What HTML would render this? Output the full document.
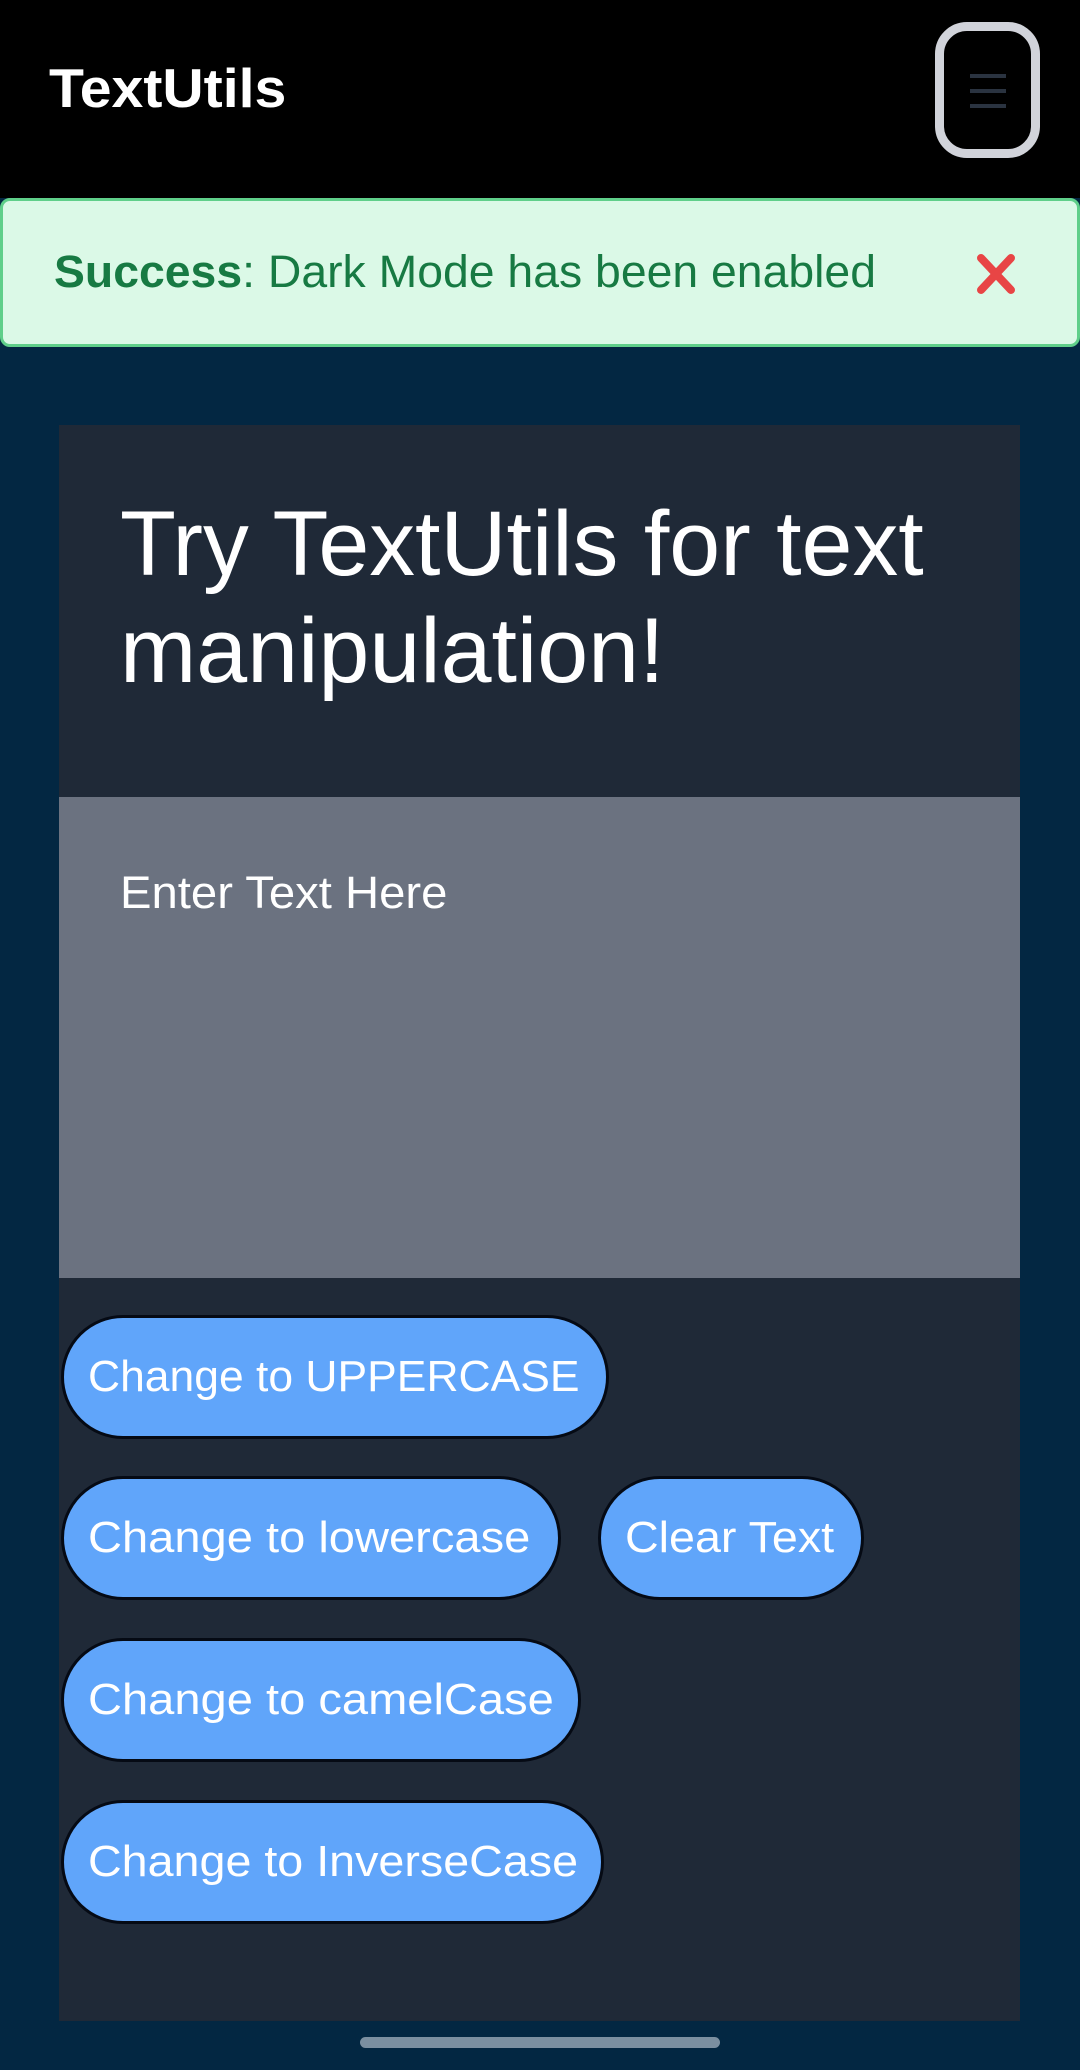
<!DOCTYPE html>
<html><head><meta charset="utf-8"><style>
*{margin:0;padding:0;box-sizing:border-box}
body{width:1080px;height:2070px;background:#032742;font-family:"Liberation Sans",sans-serif;position:relative;overflow:hidden}
.nav{position:absolute;left:0;top:0;width:1080px;height:198px;background:#000}
.brand{position:absolute;left:49px;top:56px;font-size:55px;font-weight:bold;color:#fff;transform:scaleX(1.04);transform-origin:left}
.tog{position:absolute;left:935px;top:22px;width:105px;height:136px;border:9px solid #d1d3da;border-radius:32px}
.tog i{position:absolute;left:26px;width:36px;height:4px;background:#2a3340}
.alert{position:absolute;left:0;top:198px;width:1080px;height:149px;background:#dbf9e7;border:3px solid #5fcf8a;border-radius:10px}
.alert .t{position:absolute;left:51px;top:45px;font-size:45px;color:#177a43;white-space:nowrap;transform:scaleX(1.03);transform-origin:left}
.card{position:absolute;left:59px;top:425px;width:961px;height:1596px;background:#1f2937}
h1{position:absolute;left:61px;top:66px;font-size:92px;font-weight:normal;color:#fff;line-height:107px;white-space:nowrap}
h1 span{display:block;transform:scaleX(0.995);transform-origin:left}
.ta{position:absolute;left:0;top:372px;width:961px;height:481px;background:#6b7280}
.ta span{position:absolute;left:61px;top:70px;font-size:45px;color:#fff;transform:scaleX(1.05);transform-origin:left;white-space:nowrap}
.b{position:absolute;height:124px;background:#60a5fa;border:3px solid #050a14;border-radius:62px;color:#fff;font-size:44px;line-height:118px;padding-left:24px;white-space:nowrap}
.b span{display:inline-block;transform-origin:left}
.home{position:absolute;left:360px;top:2037px;width:360px;height:11px;border-radius:6px;background:#7b8fa0}
</style></head><body>
<div class="nav"><div class="brand">TextUtils</div>
<div class="tog"><i style="top:43px"></i><i style="top:58px"></i><i style="top:73px"></i></div></div>
<div class="alert"><div class="t"><b>Success</b>: Dark Mode has been enabled</div>
<svg style="position:absolute;left:972px;top:52px" width="42" height="42" viewBox="0 0 42 42"><path d="M6 5L36 37M36 5L6 37" stroke="#e84545" stroke-width="8" stroke-linecap="round"/></svg></div>
<div class="card">
<h1><span>Try TextUtils for text</span><span>manipulation!</span></h1>
<div class="ta"><span>Enter Text Here</span></div>
</div>
<div class="b" style="left:61px;top:1315px;width:548px"><span style="transform:scaleX(1.01)">Change to UPPERCASE</span></div>
<div class="b" style="left:61px;top:1476px;width:500px"><span style="transform:scaleX(1.07)">Change to lowercase</span></div>
<div class="b" style="left:598px;top:1476px;width:266px"><span style="transform:scaleX(1.06)">Clear Text</span></div>
<div class="b" style="left:61px;top:1638px;width:520px"><span style="transform:scaleX(1.07)">Change to camelCase</span></div>
<div class="b" style="left:61px;top:1800px;width:543px"><span style="transform:scaleX(1.06)">Change to InverseCase</span></div>
<div class="home"></div>
</body></html>
